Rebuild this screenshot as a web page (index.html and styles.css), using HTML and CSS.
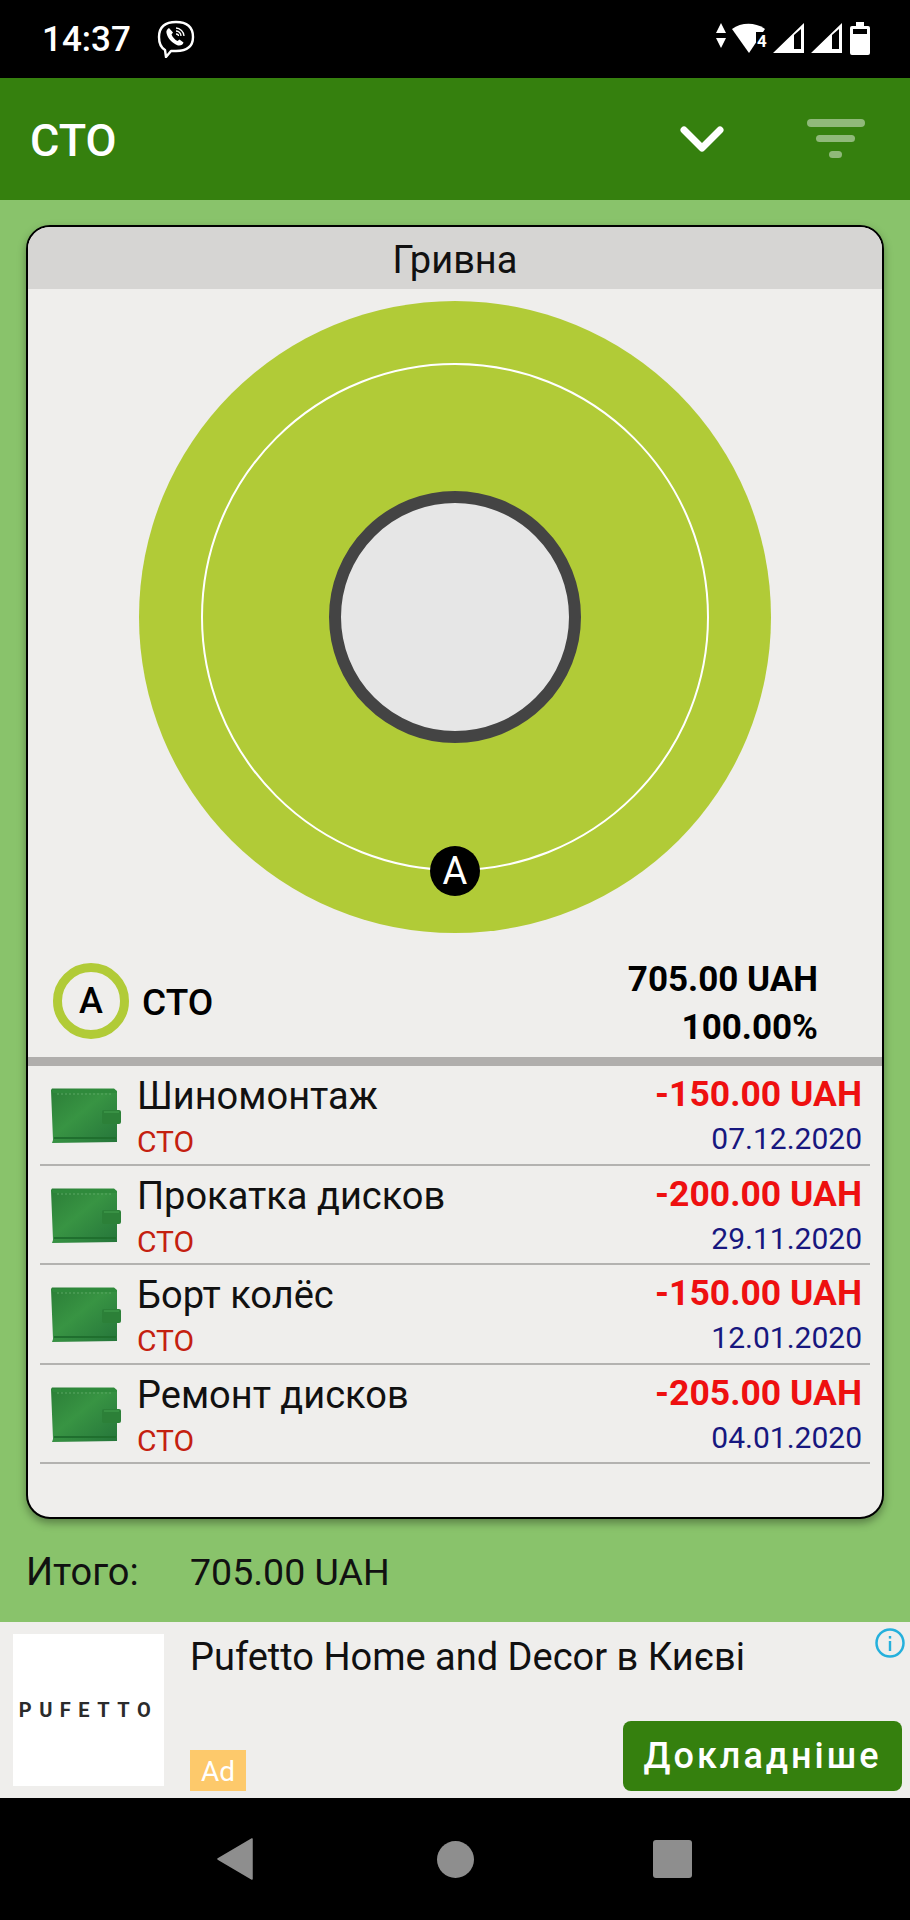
FILE: index.html
```html
<!DOCTYPE html>
<html lang="ru">
<head>
    <meta charset="UTF-8">
    <meta name="viewport" content="width=device-width, initial-scale=1.0">
    <title>СТО</title>
    <link rel="stylesheet" href="styles.css">
</head>
<body>
    <svg class="icon-defs" width="0" height="0">
        <defs>
            <linearGradient id="walletFill" x1="0" y1="0" x2="1" y2="1">
                <stop offset="0" stop-color="#2b7e37"/>
                <stop offset="0.45" stop-color="#389443"/>
                <stop offset="1" stop-color="#25753a"/>
            </linearGradient>
            <symbol id="wallet" viewBox="0 0 70 56">
                <path d="M0 2 L1 0.5 L63 0.5 L66 3 L66 54 L1 55 L2 52 Z" fill="url(#walletFill)"/>
                <path d="M0 2 L63 1 L66 4 L66 5 L2 5 Z" fill="#2f8a3c"/>
                <path d="M6 6 H62" stroke="#5aa864" stroke-width="1" stroke-dasharray="2 2" fill="none"/>
                <path d="M3 50 H65" stroke="#1f6f2e" stroke-width="2" fill="none"/>
                <rect x="51" y="22" width="19" height="14" rx="2" fill="#2c8038"/>
                <path d="M53 24 H68" stroke="#45a151" stroke-width="1" fill="none"/>
            </symbol>
        </defs>
    </svg>

    <div class="screen">
        <div class="status-bar">
            <span class="clock">14:37</span>
            <svg class="viber" width="38" height="38" viewBox="0 0 38 38">
                <path d="M19 2 C30 2 36 7 36 17 C36 27 30 31 19 31 L14 31 L9 37 L8 30 C3 27 2 23 2 17 C2 7 8 2 19 2 Z" fill="none" stroke="#fff" stroke-width="2.4" stroke-linejoin="round"/>
                <path d="M12 8 C10 9 9 11 9.5 13 C11 19 15 23 21 25.5 C24 26 26 24.5 26.5 22.5 L22.5 19.5 L20.5 21 C18 20 15.5 17 14.5 14.5 L16 12.5 Z" fill="#fff"/>
                <path d="M19 8 C23 8 27 12 27 16 M19 11 C22 11 24 13.5 24 16 M19 14 C20.5 14 21.5 15 21.5 16" fill="none" stroke="#fff" stroke-width="1.3"/>
            </svg>
            <svg class="status-icons" width="156" height="36" viewBox="716 20 156 36">
                <path d="M721 22 L726 32 H716 Z M721 47 L716 37 H726 Z" fill="#fff"/>
                <path d="M732 28 C741 21 756 21 765 28 L749 52 Z" fill="#fff"/>
                <rect x="756" y="31" width="14" height="17" fill="#000"/>
                <text class="net-type" x="757" y="46">4</text>
                <path fill-rule="evenodd" d="M773 52 L804 22 V52 Z M794 34 V48 H801 V28 Z" fill="#fff"/>
                <path fill-rule="evenodd" d="M811 52 L842 22 V52 Z M832 34 V48 H839 V28 Z" fill="#fff"/>
                <path fill-rule="evenodd" d="M856 21 H864 V25 H868 Q870 25 870 27 V52 Q870 54 868 54 H852 Q850 54 850 52 V27 Q850 25 852 25 H856 Z M853 28 V33 H867 V28 Z" fill="#fff"/>
            </svg>
        </div>

        <div class="app-bar">
            <div class="app-title">СТО</div>
            <svg class="chevron" width="44" height="26" viewBox="0 0 44 26">
                <path d="M4 4 L22 22 L40 4" fill="none" stroke="#fff" stroke-width="7" stroke-linecap="round" stroke-linejoin="round"/>
            </svg>
            <svg class="filter" width="58" height="40" viewBox="0 0 58 40">
                <rect x="0" y="0" width="58" height="8" rx="4" fill="#fff" fill-opacity="0.45"/>
                <rect x="9" y="16" width="39" height="7" rx="3.5" fill="#fff" fill-opacity="0.45"/>
                <rect x="22" y="32" width="13" height="7" rx="3.5" fill="#fff" fill-opacity="0.45"/>
            </svg>
        </div>

        <div class="content">
            <div class="card">
                <div class="card-head">Гривна</div>
                <svg class="donut" width="632" height="632" viewBox="0 0 632 632">
                    <circle cx="316" cy="316" r="316" fill="#b1cb37"/>
                    <circle cx="316" cy="316" r="253" fill="none" stroke="#fff" stroke-width="2"/>
                    <circle cx="316" cy="316" r="120" fill="#e6e6e6" stroke="#444" stroke-width="12"/>
                    <circle cx="316" cy="570" r="25" fill="#000"/>
                    <text class="donut-letter" x="316" y="583" text-anchor="middle">A</text>
                </svg>

                <div class="legend">
                    <div class="legend-mark">A</div>
                    <div class="legend-name">СТО</div>
                    <div class="legend-sum">
                        <div>705.00 UAH</div>
                        <div>100.00%</div>
                    </div>
                </div>
                <div class="thick-line"></div>

                <div class="rows">
                    <div class="row">
                        <svg class="wallet" width="70" height="56"><use href="#wallet"/></svg>
                        <div class="row-text">
                            <div class="row-name">Шиномонтаж</div>
                            <div class="row-cat">СТО</div>
                        </div>
                        <div class="row-right">
                            <div class="row-amount">-150.00 UAH</div>
                            <div class="row-date">07.12.2020</div>
                        </div>
                    </div>
                    <div class="row">
                        <svg class="wallet" width="70" height="56"><use href="#wallet"/></svg>
                        <div class="row-text">
                            <div class="row-name">Прокатка дисков</div>
                            <div class="row-cat">СТО</div>
                        </div>
                        <div class="row-right">
                            <div class="row-amount">-200.00 UAH</div>
                            <div class="row-date">29.11.2020</div>
                        </div>
                    </div>
                    <div class="row">
                        <svg class="wallet" width="70" height="56"><use href="#wallet"/></svg>
                        <div class="row-text">
                            <div class="row-name">Борт колёс</div>
                            <div class="row-cat">СТО</div>
                        </div>
                        <div class="row-right">
                            <div class="row-amount">-150.00 UAH</div>
                            <div class="row-date">12.01.2020</div>
                        </div>
                    </div>
                    <div class="row">
                        <svg class="wallet" width="70" height="56"><use href="#wallet"/></svg>
                        <div class="row-text">
                            <div class="row-name">Ремонт дисков</div>
                            <div class="row-cat">СТО</div>
                        </div>
                        <div class="row-right">
                            <div class="row-amount">-205.00 UAH</div>
                            <div class="row-date">04.01.2020</div>
                        </div>
                    </div>
                </div>
            </div>

            <div class="total">
                <span class="total-label">Итого:</span>
                <span class="total-sum">705.00 UAH</span>
            </div>
        </div>

        <div class="ad">
            <div class="ad-logo">PUFETTO</div>
            <div class="ad-body">
                <div class="ad-title">Pufetto Home and Decor в Києві</div>
                <div class="ad-bottom">
                    <span class="ad-badge">Ad</span>
                    <span class="ad-button">Докладніше</span>
                </div>
            </div>
            <svg class="ad-info" width="32" height="32" viewBox="0 0 32 32">
                <circle cx="16" cy="16" r="13.5" fill="none" stroke="#25b0dc" stroke-width="2.5"/>
                <rect x="14.8" y="14" width="2.4" height="10" fill="#25b0dc"/>
                <rect x="14.8" y="9" width="2.4" height="2.6" fill="#25b0dc"/>
            </svg>
        </div>

        <div class="nav-bar">
            <svg width="36" height="42" viewBox="0 0 36 42"><path d="M35 1 V41 L1 21 Z" fill="#8e8e8e" stroke="#8e8e8e" stroke-width="1.5" stroke-linejoin="round"/></svg>
            <div class="nav-home"></div>
            <div class="nav-square"></div>
        </div>
    </div>
</body>
</html>
```

FILE: styles.css
```css
body {
    margin: 0;
    background-color: #000;
    font-family: 'Roboto', sans-serif;
}

.icon-defs {
    position: absolute;
}

.screen {
    width: 910px;
    height: 1920px;
    display: flex;
    flex-direction: column;
    overflow: hidden;
}

/* status bar */
.status-bar {
    height: 78px;
    flex: none;
    background-color: #000;
    color: #fff;
    display: flex;
    align-items: center;
    padding: 0 38px 0 42px;
    box-sizing: border-box;
}

.clock {
    font-size: 35px;
    font-weight: 500;
    width: 115px;
}

.status-icons {
    margin-left: auto;
}

.net-type {
    font-size: 17px;
    font-weight: 700;
    fill: #fff;
}

/* app bar */
.app-bar {
    height: 122px;
    flex: none;
    background-color: #35800e;
    display: flex;
    align-items: center;
    padding: 0 45px 0 30px;
    box-sizing: border-box;
}

.app-title {
    flex: 1;
    margin-top: 2px;
    color: #fff;
    font-size: 45px;
    font-weight: 500;
}

.chevron {
    margin-right: 83px;
}

/* main */
.content {
    flex: 1;
    background-color: #89c36b;
    padding: 25px 26px 0;
    box-sizing: border-box;
}

.card {
    height: 1294px;
    background-color: #efeeec;
    border: 2px solid #000;
    border-radius: 24px;
    box-shadow: 0 4px 8px rgba(0, 0, 0, 0.35);
    overflow: hidden;
    box-sizing: border-box;
}

.card-head {
    height: 62px;
    line-height: 66px;
    background-color: #d6d5d3;
    text-align: center;
    font-size: 38px;
    color: #111;
}

.donut {
    display: block;
    margin: 12px auto 0;
}

.donut-letter {
    font-size: 38px;
    font-weight: 400;
    fill: #fff;
}

.legend {
    height: 124px;
    display: flex;
    align-items: center;
    padding: 12px 64px 0 25px;
    box-sizing: border-box;
}

.legend-mark {
    width: 76px;
    height: 76px;
    border: 9px solid #b1cb37;
    border-radius: 50%;
    box-sizing: border-box;
    display: flex;
    align-items: center;
    justify-content: center;
    font-size: 36px;
    font-weight: 500;
    color: #000;
}

.legend-name {
    flex: 1;
    margin-top: 2px;
    margin-left: 13px;
    font-size: 37px;
    font-weight: 500;
    color: #000;
}

.legend-sum {
    margin-top: 5px;
    text-align: right;
    font-size: 35px;
    font-weight: 700;
    line-height: 48px;
    color: #000;
}

.thick-line {
    height: 9px;
    background-color: #b0aeac;
}

.rows {
    padding: 0 12px;
}

.row {
    height: 99.5px;
    display: flex;
    align-items: flex-start;
    border-bottom: 2px solid #b3b2b0;
    box-sizing: border-box;
}

.wallet {
    flex: none;
    margin: 22px 0 0 11px;
}

.row-text {
    flex: 1;
    margin-left: 16px;
}

.row-name {
    margin-top: 5px;
    font-size: 38px;
    line-height: 50px;
    color: #111;
}

.row-cat {
    font-size: 30px;
    line-height: 41px;
    color: #c4200f;
}

.row-right {
    text-align: right;
    padding-right: 8px;
}

.row-amount {
    margin-top: 6px;
    font-size: 35.5px;
    font-weight: 700;
    line-height: 44px;
    color: #ee1010;
}

.row-date {
    font-size: 30px;
    line-height: 45px;
    color: #17177f;
}

.total {
    display: flex;
    margin-top: 29px;
    font-size: 38px;
    line-height: 48px;
    color: #111;
}

.total-label {
    width: 164px;
}

.total-sum {
    font-size: 37.5px;
}

/* ad */
.ad {
    height: 176px;
    flex: none;
    position: relative;
    background-color: #efeeec;
    display: flex;
    padding: 12px 8px 7px 13px;
    box-sizing: border-box;
}

.ad-logo {
    width: 151px;
    height: 152px;
    flex: none;
    background-color: #fff;
    display: flex;
    align-items: center;
    justify-content: center;
    font-size: 20px;
    font-weight: 700;
    letter-spacing: 7.5px;
    color: #2b2b2b;
}

.ad-body {
    flex: 1;
    margin-left: 26px;
    display: flex;
    flex-direction: column;
    justify-content: space-between;
}

.ad-title {
    font-size: 38px;
    line-height: 46px;
    color: #111;
}

.ad-bottom {
    display: flex;
    align-items: flex-end;
    justify-content: space-between;
}

.ad-badge {
    width: 56px;
    height: 41px;
    background-color: #fdc96b;
    color: #fff;
    font-size: 28px;
    line-height: 44px;
    text-align: center;
}

.ad-button {
    width: 279px;
    height: 70px;
    background-color: #35800e;
    border-radius: 8px;
    color: #fff;
    font-size: 36px;
    font-weight: 500;
    letter-spacing: 3px;
    line-height: 70px;
    text-align: center;
}

.ad-info {
    position: absolute;
    top: 5px;
    right: 4px;
}

/* nav bar */
.nav-bar {
    height: 122px;
    flex: none;
    background-color: #000;
    display: flex;
    align-items: center;
    justify-content: center;
    padding-right: 2px;
    box-sizing: border-box;
}

.nav-bar svg {
    margin-right: 184px;
}

.nav-home {
    width: 37px;
    height: 37px;
    border-radius: 50%;
    background-color: #8e8e8e;
}

.nav-square {
    width: 39px;
    height: 38px;
    border-radius: 3px;
    background-color: #8e8e8e;
    margin-left: 179px;
}
```
